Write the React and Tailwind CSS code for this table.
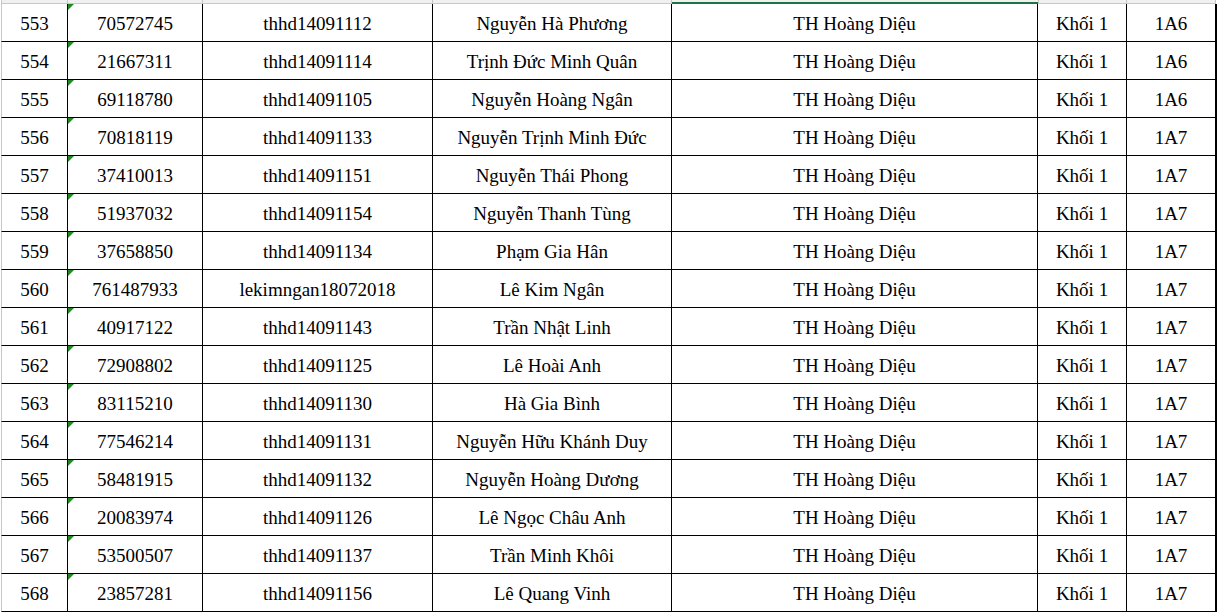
import React from "react";

// Rows of the sheet, as shown
const rows = [
  ["553", "70572745", "thhd14091112", "Nguyễn Hà Phương", "1A6"],
  ["554", "21667311", "thhd14091114", "Trịnh Đức Minh Quân", "1A6"],
  ["555", "69118780", "thhd14091105", "Nguyễn Hoàng Ngân", "1A6"],
  ["556", "70818119", "thhd14091133", "Nguyễn Trịnh Minh Đức", "1A7"],
  ["557", "37410013", "thhd14091151", "Nguyễn Thái Phong", "1A7"],
  ["558", "51937032", "thhd14091154", "Nguyễn Thanh Tùng", "1A7"],
  ["559", "37658850", "thhd14091134", "Phạm Gia Hân", "1A7"],
  ["560", "761487933", "lekimngan18072018", "Lê Kim Ngân", "1A7"],
  ["561", "40917122", "thhd14091143", "Trần Nhật Linh", "1A7"],
  ["562", "72908802", "thhd14091125", "Lê Hoài Anh", "1A7"],
  ["563", "83115210", "thhd14091130", "Hà Gia Bình", "1A7"],
  ["564", "77546214", "thhd14091131", "Nguyễn Hữu Khánh Duy", "1A7"],
  ["565", "58481915", "thhd14091132", "Nguyễn Hoàng Dương", "1A7"],
  ["566", "20083974", "thhd14091126", "Lê Ngọc Châu Anh", "1A7"],
  ["567", "53500507", "thhd14091137", "Trần Minh Khôi", "1A7"],
  ["568", "23857281", "thhd14091156", "Lê Quang Vinh", "1A7"],
];

const cell = "h-full flex items-center justify-center pt-[4px] border-r border-black box-border shrink-0";

const App = () => {
  return (
    <div className="w-[1219px] h-[614px] bg-white overflow-hidden font-['Liberation_Serif',serif] text-[19px] text-black">
      {/* strip above the first visible row */}
      <div className="flex h-[4px] pl-[1px]">
        <div className="w-[67px] h-full bg-[#f0f0f0] border-l border-r border-b border-[#c8c8c8] box-border" />
        <div className="w-[135px] h-full bg-[#f0f0f0] border-r border-b border-[#c8c8c8] box-border" />
        <div className="w-[230px] h-full bg-[#f0f0f0] border-r border-b border-[#c8c8c8] box-border" />
        <div className="w-[239px] h-full bg-[#f0f0f0] border-r border-b border-[#c8c8c8] box-border" />
        <div className="w-[366px] h-full bg-[#f0f0f0] border-b-2 border-[#217346] box-border" />
        <div className="w-[89px] h-full bg-[#f0f0f0] border-r border-l border-b border-[#c8c8c8] box-border" />
        <div className="w-[89px] h-full bg-[#f0f0f0] border-r border-b border-[#c8c8c8] box-border" />
      </div>
      {/* table body */}
      <div className="flex flex-col pl-[1px]">
        {rows.map((r) => (
          <div key={r[0]} className="flex h-[38px]">
            <div className={`${cell} w-[67px] border-l border-l-[#c8c8c8] border-b border-b-black`}>{r[0]}</div>
            <div className={`${cell} w-[135px] border-b border-b-black relative`}>
              <span className="absolute top-0 left-0 w-0 h-0 border-t-[6px] border-r-[6px] border-t-[#1f8a1f] border-r-transparent" />
              {r[1]}
            </div>
            <div className={`${cell} w-[230px] border-b border-b-black`}>{r[2]}</div>
            <div className={`${cell} w-[239px] border-b border-b-black`}>{r[3]}</div>
            <div className={`${cell} w-[366px] border-b border-b-black`}>TH Hoàng Diệu</div>
            <div className={`${cell} w-[89px] border-b border-b-black`}>Khối 1</div>
            <div className={`${cell} w-[90px] border-r-2 border-b border-b-black`}>{r[4]}</div>
          </div>
        ))}
      </div>
    </div>
  );
};

export default App;
